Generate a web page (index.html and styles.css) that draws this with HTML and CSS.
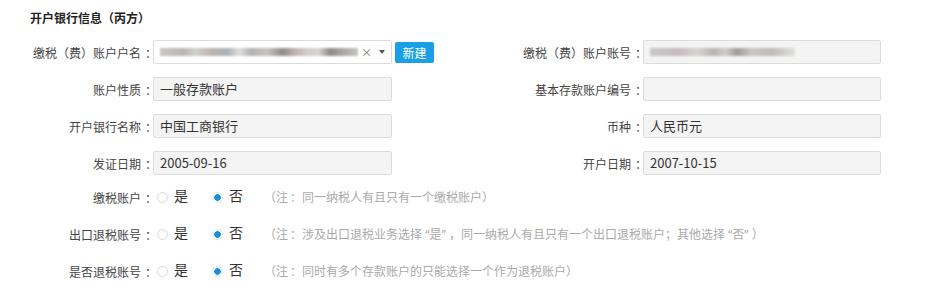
FILE: index.html
```html
<!DOCTYPE html>
<html lang="zh-CN">
<head>
    <meta charset="UTF-8">
    <title>开户银行信息</title>
    <link rel="stylesheet" href="styles.css">
</head>
<body>
    <div class="panel">
        <h3 class="panel-title">开户银行信息（丙方）</h3>

        <div class="row">
            <div class="half">
                <label class="label">缴税（费）账户户名<span class="colon">：</span></label>
                <div class="select-box">
                    <span class="blur blur-long"></span>
                    <span class="clear">×</span>
                    <span class="caret"></span>
                </div>
                <button class="btn-new">新建</button>
            </div>
            <div class="half">
                <label class="label label-wide">缴税（费）账户账号<span class="colon">：</span></label>
                <div class="input input-right"><span class="blur blur-short"></span></div>
            </div>
        </div>

        <div class="row">
            <div class="half">
                <label class="label">账户性质<span class="colon">：</span></label>
                <div class="input">一般存款账户</div>
            </div>
            <div class="half">
                <label class="label label-wide">基本存款账户编号<span class="colon">：</span></label>
                <div class="input input-right"></div>
            </div>
        </div>

        <div class="row">
            <div class="half">
                <label class="label">开户银行名称<span class="colon">：</span></label>
                <div class="input">中国工商银行</div>
            </div>
            <div class="half">
                <label class="label label-wide">币种<span class="colon">：</span></label>
                <div class="input input-right">人民币元</div>
            </div>
        </div>

        <div class="row">
            <div class="half">
                <label class="label">发证日期<span class="colon">：</span></label>
                <div class="input">2005-09-16</div>
            </div>
            <div class="half">
                <label class="label label-wide">开户日期<span class="colon">：</span></label>
                <div class="input input-right">2007-10-15</div>
            </div>
        </div>

        <div class="radio-rows">
            <div class="radio-row">
                <label class="label">缴税账户<span class="colon">：</span></label>
                <span class="radio"></span><span class="radio-text">是</span>
                <span class="radio checked"></span><span class="radio-text">否</span>
                <span class="note">（注<span class="note-colon">：</span>同一纳税人有且只有一个缴税账户）</span>
            </div>
            <div class="radio-row">
                <label class="label">出口退税账号<span class="colon">：</span></label>
                <span class="radio"></span><span class="radio-text">是</span>
                <span class="radio checked"></span><span class="radio-text">否</span>
                <span class="note">（注<span class="note-colon">：</span>涉及出口退税业务选择 “是” ，同一纳税人有且只有一个出口退税账户；其他选择 “否” ）</span>
            </div>
            <div class="radio-row">
                <label class="label">是否退税账号<span class="colon">：</span></label>
                <span class="radio"></span><span class="radio-text">是</span>
                <span class="radio checked"></span><span class="radio-text">否</span>
                <span class="note">（注<span class="note-colon">：</span>同时有多个存款账户的只能选择一个作为退税账户）</span>
            </div>
        </div>
    </div>
</body>
</html>
```

FILE: styles.css
```css
body {
    margin: 0;
    background: #ffffff;
    font-family: "Noto Sans CJK SC", "Noto Sans", sans-serif;
    color: #333;
}

.panel {
    padding: 10px 0 0 30px;
}

.panel-title {
    margin: 0;
    font-size: 12px;
    line-height: 16px;
    font-weight: bold;
    color: #222;
}

.row {
    display: flex;
    height: 24px;
    margin-bottom: 13px;
}

.panel-title + .row {
    margin-top: 14px;
}

.half {
    display: flex;
    align-items: center;
    flex-shrink: 0;
}

.half:first-child {
    width: 461px;
}

.label {
    width: 123px;
    text-align: right;
    font-size: 12px;
    color: #444;
    white-space: nowrap;
    flex-shrink: 0;
}

.label-wide {
    width: 152px;
}

/* full-width colon sits centred in its box in the original UI font */
.colon {
    margin-left: 4px;
    margin-right: -4px;
}

.note-colon {
    margin-left: 2px;
}

.input {
    box-sizing: border-box;
    width: 239px;
    height: 24px;
    line-height: 22px;
    padding: 0 6px;
    border: 1px solid #dcdcdc;
    border-radius: 2px;
    background: #f4f4f4;
    font-size: 13px;
    color: #333;
    display: flex;
    align-items: center;
}

.input-right {
    width: 238px;
}

.select-box {
    box-sizing: border-box;
    width: 239px;
    height: 24px;
    border: 1px solid #dcdcdc;
    border-radius: 2px;
    background: #fff;
    display: flex;
    align-items: center;
    padding-left: 6px;
}

/* blurred account name / number */
.blur {
    display: block;
    height: 8px;
    filter: blur(1.2px);
}

.blur-long {
    width: 198px;
    background: linear-gradient(90deg,
        #c9c6c4 0, #b9b6b4 12%, #d2d0c8 18%, #bdb3ac 26%, #a9b2b6 34%,
        #e0dedc 40%, #b4b2b0 46%, #c8c4c2 54%, #8e8c8a 62%, #c0b4ac 68%,
        #cfccc8 74%, #d8d6d2 80%, #8f8b86 86%, #aaa5a0 92%, #c6c4c2 100%);
}

.blur-short {
    width: 145px;
    background: linear-gradient(90deg,
        #cac6c6 0, #c8bcbe 20%, #d6d4d2 32%, #b9b5b4 44%, #d0cdcb 52%,
        #a09c9a 60%, #c9c7c0 70%, #bfbcb8 84%, #e2e0de 100%);
}

.clear {
    margin-left: 3px;
    font-size: 11px;
    color: #777;
}

.caret {
    margin-left: 7px;
    width: 0;
    height: 0;
    border-left: 3px solid transparent;
    border-right: 3px solid transparent;
    border-top: 4px solid #555;
}

.btn-new {
    margin-left: 3px;
    width: 39px;
    height: 21px;
    padding: 0;
    border: none;
    border-radius: 2px;
    background: #1a9fe6;
    color: #fff;
    font-family: inherit;
    font-size: 12px;
    cursor: pointer;
}

.radio-rows {
    margin-top: -3px;
}

.radio-row {
    display: flex;
    align-items: center;
    height: 24px;
    margin-bottom: 13px;
}

.radio {
    box-sizing: border-box;
    width: 11px;
    height: 11px;
    margin-left: 4px;
    border: 1px solid #d8d8d8;
    border-radius: 50%;
    background: #fff;
    flex-shrink: 0;
}

.radio.checked {
    margin-left: 24px;
    border-color: #d5e9f7;
    background: radial-gradient(circle, #1a8fdf 0, #1a8fdf 3px, #fff 3.6px);
}

.radio-text {
    margin-left: 6px;
    margin-top: -5px;
    font-size: 14px;
    color: #333;
}

/* latin quotes come out narrow, as in the original */
.note {
    margin-left: 21px;
    font-family: "Noto Sans", "Noto Sans CJK SC", sans-serif;
    font-size: 12px;
    color: #aaa;
}
```
